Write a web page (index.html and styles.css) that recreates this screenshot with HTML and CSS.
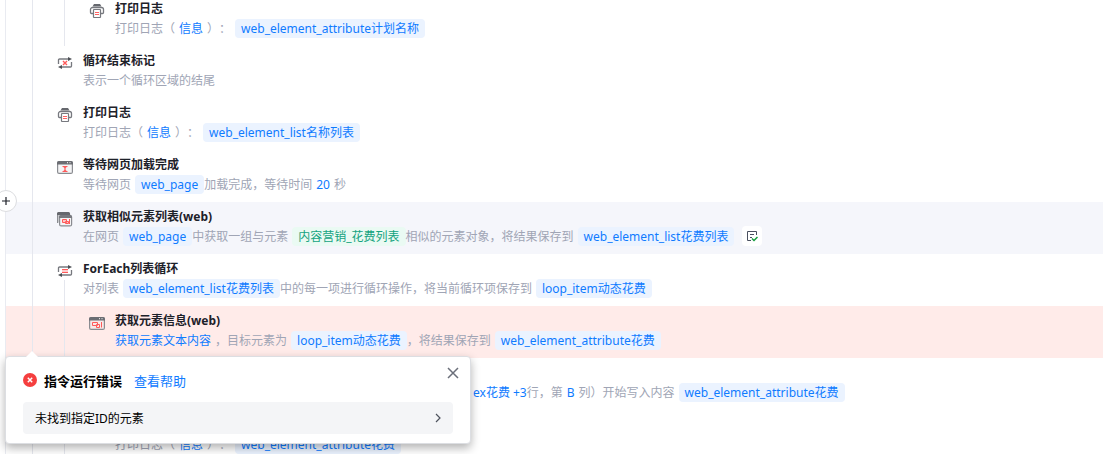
FILE: index.html
```
<!DOCTYPE html>
<html lang="zh-CN">
<head>
    <meta charset="UTF-8">
    <meta name="viewport" content="width=device-width, initial-scale=1.0">
    <title>流程编辑</title>
    <link rel="stylesheet" href="styles.css">
</head>
<body>
    <svg class="sprite" aria-hidden="true">
        <symbol id="icon-print" viewBox="0 0 16 16">
            <path d="M3.500 3.500 5 1h6l1.500 2.500z" fill="#66686e"/>
            <path d="M4 10.500H2.500a1 1 0 0 1-1-1v-3a2 2 0 0 1 2-2h9a2 2 0 0 1 2 2v3a1 1 0 0 1-1 1H12" fill="none" stroke="#77797f" stroke-width="1.300"/>
            <rect x="4.500" y="6.500" width="7" height="8" rx=".5" fill="#fff" stroke="#77797f" stroke-width="1.200"/>
            <path d="M6 9.500h4M6 11.500h4" stroke="#ff6262"/>
        </symbol>
        <symbol id="icon-loop-end" viewBox="0 0 16 16">
            <path d="M1.500 9V5a1 1 0 0 1 1-1H13M14.500 7v4a1 1 0 0 1-1 1H3" fill="none" stroke="#77797f" stroke-width="1.300"/>
            <path d="M11 2l4 2-4 2zM5 10l-4 2 4 2z" fill="#4d4f55"/>
            <path d="M6 6l4 4M10 6l-4 4" stroke="#ff5a5a" stroke-width="1.400"/>
        </symbol>
        <symbol id="icon-loop" viewBox="0 0 16 16">
            <path d="M1.500 9V5a1 1 0 0 1 1-1H13M14.500 7v4a1 1 0 0 1-1 1H3" fill="none" stroke="#77797f" stroke-width="1.300"/>
            <path d="M11 2l4 2-4 2zM5 10l-4 2 4 2z" fill="#4d4f55"/>
            <path d="M5 6.500h6M5 9.500h6" stroke="#ff5a5a"/>
            <path d="M5 8h6" stroke="#ff9c9c"/>
        </symbol>
        <symbol id="icon-wait" viewBox="0 0 16 16">
            <rect x=".6" y="2.600" width="14.800" height="11.800" rx="1.500" fill="#f4f4f5" stroke="#8a8c91" stroke-width="1.200"/>
            <path d="M0 5.500V4a2 2 0 0 1 2-2h12a2 2 0 0 1 2 2v1.500z" fill="#6b6d73"/>
            <path d="M10 3.700h1M12.500 3.700h1" stroke="#fff"/>
            <path d="M5.500 7.500h5M5.500 12.500h5" stroke="#ff5a5a"/>
            <path d="M6.500 7.500h3L8 10zM8 10l1.500 2.500h-3z" fill="#ff5a5a" stroke="#ff5a5a" stroke-width=".5"/>
        </symbol>
        <symbol id="icon-similar" viewBox="0 0 16 16">
            <path d="M.6 12V3a1 1 0 0 1 1-1h10a1 1 0 0 1 1 1v1" fill="#d5d6d9" stroke="#8a8c91" stroke-width="1.200"/>
            <path d="M0 4V2.500A1.500 1.500 0 0 1 1.500 1h10A1.500 1.500 0 0 1 13 2.500V4z" fill="#66686e"/>
            <rect x="2.600" y="4.600" width="12" height="10.300" rx="1.500" fill="#f4f4f5" stroke="#8a8c91" stroke-width="1.200"/>
            <path d="M2 7V6a2 2 0 0 1 2-2h9a2 2 0 0 1 2 2v1z" fill="#77797f"/>
            <path d="M5.500 8.500h4v3h-4zM8.500 10.500h3v2h-3zM12.500 8v5" fill="#ffc4c4" stroke="#ff5a5a"/>
        </symbol>
        <symbol id="icon-element" viewBox="0 0 16 16">
            <rect x=".6" y="2.600" width="14.800" height="11.800" rx="1.500" fill="#f8e9e8" stroke="#8a8c91" stroke-width="1.200"/>
            <path d="M0 5.500V4a2 2 0 0 1 2-2h12a2 2 0 0 1 2 2v1.500z" fill="#6b6d73"/>
            <path d="M10 3.700h1M12.500 3.700h1" stroke="#fff"/>
            <path d="M3.500 7.500h5v3h-5zM7.500 9.500h3v3h-3zM12.500 7v5.500" fill="none" stroke="#ff5a5a"/>
        </symbol>
    </svg>

    <main class="flow">
        <ol class="steps">
            <li class="step nested">
                <svg class="step-icon"><use href="#icon-print"/></svg>
                <div class="step-body">
                    <h2>打印日志</h2>
                    <p>打印日志（<a class="value" href="#">信息</a>）：<a class="chip" href="#">web_element_attribute计划名称</a></p>
                </div>
            </li>
            <li class="step">
                <svg class="step-icon"><use href="#icon-loop-end"/></svg>
                <div class="step-body">
                    <h2>循环结束标记</h2>
                    <p>表示一个循环区域的结尾</p>
                </div>
            </li>
            <li class="step">
                <svg class="step-icon"><use href="#icon-print"/></svg>
                <div class="step-body">
                    <h2>打印日志</h2>
                    <p>打印日志（<a class="value" href="#">信息</a>）：<a class="chip" href="#">web_element_list名称列表</a></p>
                </div>
            </li>
            <li class="step">
                <svg class="step-icon"><use href="#icon-wait"/></svg>
                <div class="step-body">
                    <h2>等待网页加载完成</h2>
                    <p>等待网页<a class="chip" href="#">web_page</a>加载完成，等待时间<a class="value" href="#">20</a>秒</p>
                </div>
            </li>
            <li class="step selected">
                <button class="add-step" type="button" aria-label="添加指令">
                    <svg viewBox="0 0 10 10"><path d="M5 1v8M1 5h8"/></svg>
                </button>
                <svg class="step-icon"><use href="#icon-similar"/></svg>
                <div class="step-body">
                    <h2>获取相似元素列表(web)</h2>
                    <p>在网页<a class="chip" href="#">web_page</a>中获取一组与元素<a class="chip element" href="#">内容营销_花费列表</a>相似的元素对象，将结果保存到<a class="chip" href="#">web_element_list花费列表</a><button class="check" type="button" aria-label="校验元素"><svg viewBox="0 0 12 12"><path d="M10.500 5V1.500h-9v9H5M4 4.500h4M4 7.500h2" stroke="#4a5060"/><path d="M6 8.500l2 2 3.500-3.500" stroke="#0f9d3a" stroke-width="1.500"/></svg></button></p>
                </div>
            </li>
            <li class="step loop-start">
                <svg class="step-icon"><use href="#icon-loop"/></svg>
                <div class="step-body">
                    <h2>ForEach列表循环</h2>
                    <p>对列表<a class="chip" href="#">web_element_list花费列表</a>中的每一项进行循环操作，将当前循环项保存到<a class="chip" href="#">loop_item动态花费</a></p>
                </div>
            </li>
            <li class="step nested failed">
                <svg class="step-icon"><use href="#icon-element"/></svg>
                <div class="step-body">
                    <h2>获取元素信息(web)</h2>
                    <p><a class="value first" href="#">获取元素文本内容</a>，目标元素为<a class="chip" href="#">loop_item动态花费</a>，将结果保存到<a class="chip" href="#">web_element_attribute花费</a></p>
                </div>
                <section class="error-pop" role="alertdialog" aria-labelledby="error-title">
                    <header>
                        <svg class="error-icon" viewBox="0 0 14 14"><circle cx="7" cy="7" r="7" fill="#f53f3f"/><path d="M4.800 4.800l4.400 4.400M9.200 4.800l-4.400 4.400" stroke="#fff" stroke-width="1.500"/></svg>
                        <h3 id="error-title">指令运行错误</h3>
                        <a href="#">查看帮助</a>
                        <button class="close" type="button" aria-label="关闭">
                            <svg viewBox="0 0 12 12"><path d="M1 1l10 10M11 1L1 11"/></svg>
                        </button>
                    </header>
                    <button class="error-detail" type="button">
                        <span>未找到指定ID的元素</span>
                        <svg viewBox="0 0 6 10"><path d="M1 1l4 4-4 4"/></svg>
                    </button>
                </section>
            </li>
            <li class="step nested beside-pop">
                <div class="step-body">
                    <p><a class="value first last" href="#">ex花费 +3</a>行，第<a class="value" href="#">B</a>列）开始写入内容<a class="chip" href="#">web_element_attribute花费</a></p>
                </div>
            </li>
            <li class="step nested below-pop">
                <div class="step-body">
                    <p>打印日志（<a class="value" href="#">信息</a>）：<a class="chip" href="#">web_element_attribute花费</a></p>
                </div>
            </li>
        </ol>
    </main>
</body>
</html>
```
FILE: styles.css
```
* {
    box-sizing: border-box;
}

body {
    margin: 0;
    background: #fff;
    color: #1d2129;
    font-family: "Noto Sans", "Noto Sans CJK SC", sans-serif;
    font-size: 12px;
    text-spacing-trim: space-all;
}

a {
    color: #0f7bff;
    text-decoration: none;
}

button {
    padding: 0;
    border: none;
    font: inherit;
    color: inherit;
    cursor: pointer;
}

h2, h3, p, ol {
    margin: 0;
    padding: 0;
}

svg {
    display: block;
    fill: none;
}

.sprite {
    position: absolute;
    width: 0;
    height: 0;
}

.flow {
    height: 100vh;
    overflow: hidden;
    padding-left: 5px;
}

/* the list is scrolled slightly past its first step */
.steps {
    margin-top: -6px;
    border-left: 1px solid #e9ebf1;
    list-style: none;
}

.step {
    position: relative;
    display: flex;
    gap: 10px;
    height: 52px;
    padding: 6px 0 8px 51px;
}

.step.nested {
    padding-left: 83px;
}

.step.nested.beside-pop {
    padding-left: 467px;
}

.step.nested.below-pop {
    padding-left: 109px;
}

/* indent guides */
.step::before,
.step.nested::after,
.step.loop-start::after {
    content: "";
    position: absolute;
    top: 0;
    bottom: 0;
    left: 26px;
    width: 1px;
    background: #e5e7ee;
}

.step.nested::after,
.step.loop-start::after {
    left: 58px;
}

.step.loop-start::after {
    top: 26px;
}

.step.selected {
    background: #f5f6fb;
}

.step.failed {
    background: #ffebe9;
}

.step-icon {
    flex: none;
    width: 16px;
    height: 16px;
    margin-top: 3px;
}

.step-body {
    display: flex;
    flex-direction: column;
    justify-content: flex-end;
}

.step h2 {
    font-size: 12px;
    line-height: 18px;
    font-weight: 700;
}

.step p {
    display: flex;
    align-items: center;
    height: 20px;
    color: #a0a5b5;
    line-height: 19px;
    white-space: nowrap;
}

.value {
    margin: 0 4px;
}

.value.first {
    margin-left: 0;
}

.value.last {
    margin-right: 0;
}

.chip {
    height: 19px;
    margin-left: 4px;
    padding: 0 6px;
    border-radius: 4px;
    background: #ebf3ff;
}

.chip.element {
    background: #eafaf3;
    color: #14a37f;
}

.check {
    display: flex;
    align-items: center;
    justify-content: center;
    width: 20px;
    height: 20px;
    margin-left: 8px;
    border-radius: 4px;
    background: #fff;
}

.check svg {
    width: 12px;
    height: 12px;
}

.add-step {
    position: absolute;
    top: -12px;
    left: -11px;
    z-index: 1;
    display: flex;
    align-items: center;
    justify-content: center;
    width: 22px;
    height: 22px;
    border: 1px solid #dcdde0;
    border-radius: 50%;
    background: #fff;
}

.add-step svg {
    width: 10px;
    height: 10px;
    stroke: #1d2129;
    stroke-width: 1.2;
}

.error-pop {
    position: absolute;
    top: 50px;
    left: -1px;
    z-index: 2;
    width: 466px;
    padding: 12px 17px 9px;
    border: 1px solid #dcdee2;
    border-radius: 4px;
    background: #fff;
    box-shadow: 0 4px 10px rgba(0, 0, 0, 0.3);
    color: #000;
}

.error-pop::before {
    content: "";
    position: absolute;
    top: -6px;
    left: 20px;
    border: 6px solid transparent;
    border-top: none;
    border-bottom-color: #fff;
}

.error-pop header {
    display: flex;
    align-items: center;
    height: 22px;
    margin-bottom: 11px;
    font-size: 13px;
}

.error-pop h3 {
    margin: 0 12px 0 7px;
    font-size: 13px;
    font-weight: 700;
}

.error-icon {
    width: 14px;
    height: 14px;
}

.close {
    align-self: flex-start;
    margin: -8px -12px 0 auto;
    padding: 6px;
    background: none;
}

.close svg {
    width: 12px;
    height: 12px;
    stroke: #6b6f7a;
    stroke-width: 1.5;
}

.error-detail {
    display: flex;
    align-items: center;
    justify-content: space-between;
    width: 100%;
    height: 32px;
    padding: 0 12px;
    border-radius: 4px;
    background: #f4f5f7;
}

.error-detail svg {
    width: 6px;
    height: 10px;
    stroke: #4e535e;
    stroke-width: 1.2;
}
```
